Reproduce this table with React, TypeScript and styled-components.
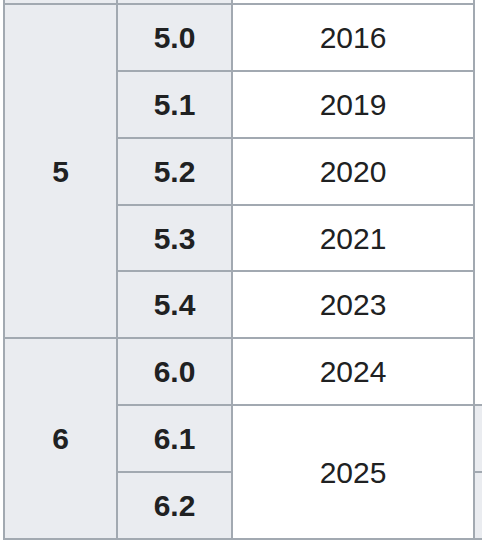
import React from 'react'
import styled, { createGlobalStyle } from 'styled-components'

const GlobalStyle = createGlobalStyle`
  html, body {
    margin: 0;
    padding: 0;
    background: #ffffff;
    overflow: hidden;
  }
  body {
    font-family: 'Liberation Sans', Arial, Helvetica, sans-serif;
    color: #202122;
  }
`

const Page = styled.div`
  width: 482px;
  height: 546px;
  overflow: hidden;
  padding-left: 3px;
  box-sizing: border-box;
`

// the table keeps going above and to the right, only this slice is visible
const Table = styled.table`
  border-collapse: collapse;
  table-layout: fixed;
  width: 670px;
  margin-top: -64px;
  font-size: 30px;
  line-height: 1.3;
`

const Col = styled.col<{ $width: number }>`
  width: ${({ $width }) => $width}px;
`

const Cell = styled.td<{ $head?: boolean }>`
  border: 2px solid #a2a9b1;
  height: 64.9px;
  padding: 0 10px;
  text-align: center;
  vertical-align: middle;
  background: ${({ $head }) => ($head ? '#eaecf0' : '#ffffff')};
  font-weight: ${({ $head }) => ($head ? 700 : 400)};
  white-space: nowrap;
`

interface Release {
  version: string
  year?: string
  yearSpan?: number
  extra?: boolean
}

interface Group {
  major: string
  releases: Release[]
}

// first group is the tail of the rows scrolled out above
const groups: Group[] = [
  { major: '', releases: [{ version: '', year: '' }] },
  {
    major: '5',
    releases: [
      { version: '5.0', year: '2016' },
      { version: '5.1', year: '2019' },
      { version: '5.2', year: '2020' },
      { version: '5.3', year: '2021' },
      { version: '5.4', year: '2023' },
    ],
  },
  {
    major: '6',
    releases: [
      { version: '6.0', year: '2024' },
      { version: '6.1', year: '2025', yearSpan: 2, extra: true },
      { version: '6.2', extra: true },
    ],
  },
]

export default function App() {
  return (
    <>
      <GlobalStyle />
      <Page>
        <Table>
          <colgroup>
            <Col $width={113} />
            <Col $width={115} />
            <Col $width={242} />
            <Col $width={200} />
          </colgroup>
          <tbody>
            {groups.map((g, gi) =>
              g.releases.map((r, i) => (
                <tr key={`${gi}-${i}`}>
                  {i === 0 && (
                    <Cell as="th" $head rowSpan={g.releases.length}>
                      {g.major}
                    </Cell>
                  )}
                  <Cell as="th" $head>
                    {r.version}
                  </Cell>
                  {r.year !== undefined && (
                    <Cell rowSpan={r.yearSpan ?? 1}>{r.year}</Cell>
                  )}
                  {r.extra && <Cell as="th" $head />}
                </tr>
              ))
            )}
          </tbody>
        </Table>
      </Page>
    </>
  )
}
